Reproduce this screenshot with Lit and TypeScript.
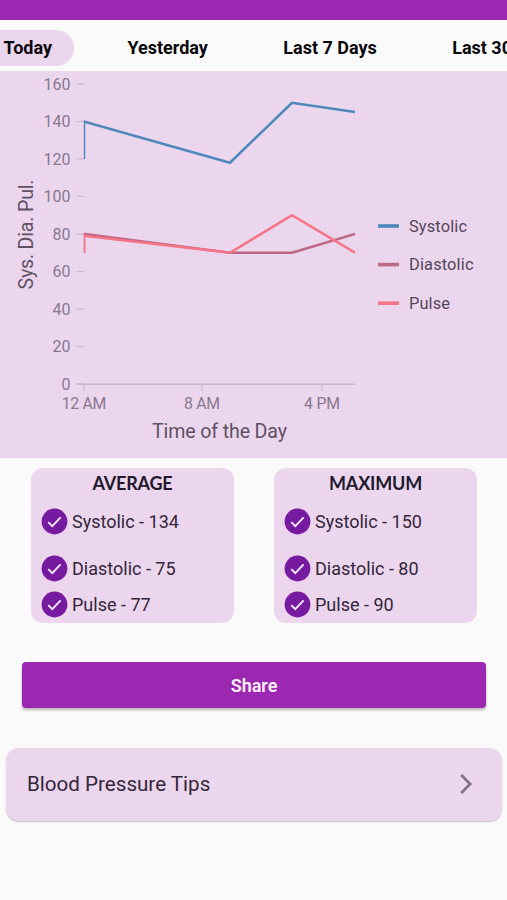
import { LitElement, html, css, svg } from "lit";
import { customElement, property } from "lit/decorators.js";

type Point = [number, number];

const BASE_Y = 313;
const UNIT = 1.875;
const TOP = 13;

@customElement("pressure-chart")
export class PressureChart extends LitElement {
  static styles = css`
    :host { display: block; height: 387px; background: #ebd6ee; }
    svg { display: block; width: 507px; height: 387px; font-family: Roboto, "Noto Sans", sans-serif; }
    .tick { fill: #87788d; font-size: 16px; }
    .hour { fill: #87788d; font-size: 15.8px; }
    .title { fill: #5f5164; font-size: 19.6px; }
    .legend { fill: #54465a; font-size: 16.4px; }
    .axis { stroke: #c9b5cf; stroke-width: 1.6; }
    .mark { stroke: #cdbad2; stroke-width: 1.4; }
    .line { fill: none; stroke-width: 2.5; stroke-linejoin: miter; }
  `;

  private series: { name: string; color: string; width: number; points: Point[] }[] = [
    { name: "Systolic", color: "#4e87b9", width: 58, points: [[84, 120], [84, 140], [230, 118], [292, 150], [355, 145]] },
    { name: "Diastolic", color: "#bd6985", width: 64.5, points: [[84, 70], [84, 80], [230, 70], [292, 70], [355, 80]] },
    { name: "Pulse", color: "#f57486", width: 41, points: [[84, 70], [84, 79], [230, 70], [292, 90], [355, 70]] },
  ];

  private path(points: Point[]) {
    return points.map(([x, v]) => `${x},${BASE_Y - v * UNIT}`).join(" ");
  }

  render() {
    const values = [0, 20, 40, 60, 80, 100, 120, 140, 160];
    const hours: [number, string, number][] = [[84, "12 AM", 44.5], [202, "8 AM", 36], [322, "4 PM", 36]];
    return html`<svg viewBox="0 0 507 387">
      <clipPath id="plot"><rect x="83.8" y=${TOP} width="271.2" height="300"></rect></clipPath>
      ${values.map((v) => {
        const y = BASE_Y - v * UNIT;
        return svg`<line class="mark" x1="77" x2="84" y1=${y} y2=${y}></line>
          <text class="tick" x="70.5" y=${y + 5.7} text-anchor="end">${v}</text>`;
      })}
      <line class="axis" x1="77" x2="355" y1="313.3" y2="313.3"></line>
      ${hours.map(([x, t, w]) => svg`<line class="mark" x1=${x} x2=${x} y1="313" y2="320"></line>
        <text class="hour" x=${x} y="338" text-anchor="middle" textLength=${w}>${t}</text>`)}
      <g clip-path="url(#plot)">
        ${this.series.map((s) => svg`<polyline class="line" stroke=${s.color} points=${this.path(s.points)}></polyline>`)}
      </g>
      <text class="title" x="219.5" y="366.5" text-anchor="middle" textLength="135">Time of the Day</text>
      <text class="title" transform="translate(32.5 163.5) rotate(-90)" text-anchor="middle" textLength="110">Sys. Dia. Pul.</text>
      ${this.series.map((s, i) => {
        const y = 155 + i * 38.6;
        return svg`<rect x="378" y=${y - 1.8} width="21" height="3.6" fill=${s.color}></rect>
          <text class="legend" x="409" y=${y + 5.7} textLength=${s.width}>${s.name}</text>`;
      })}
    </svg>`;
  }
}

@customElement("stat-card")
export class StatCard extends LitElement {
  static styles = css`
    :host { display: block; box-sizing: border-box; width: 203px; height: 155px; border-radius: 12px; background: #ebd6ee; }
    .heading { height: 30px; text-align: center; font: 700 18px/31px Lato, sans-serif; letter-spacing: -0.2px; color: #22182b; }
    .row { display: flex; align-items: center; gap: 4px; height: 26px; padding-left: 10px; font-size: 18px; color: #33263a; }
    .row + .row { margin-top: 21px; }
    .row + .row + .row { margin-top: 10px; }
    .first { margin-top: 10px; }
    svg { width: 27px; height: 27px; flex: none; }
  `;
  @property() heading = "";
  @property({ attribute: false }) items: [string, number][] = [];

  render() {
    return html`<div class="heading">${this.heading}</div>
      ${this.items.map(([name, value], i) => html`<div class="row ${i === 0 ? "first" : ""}">
        <svg viewBox="0 0 27 27">
          <circle cx="13.5" cy="13.5" r="12.9" fill="#761ba0"></circle>
          <path d="M7.3 14.1l4 4 8.3-8.7" fill="none" stroke="#f6e9f8" stroke-width="1.9"></path>
        </svg>
        <span>${name} - ${value}</span>
      </div>`)}`;
  }
}

@customElement("app-root")
export class AppRoot extends LitElement {
  static styles = css`
    :host { display: block; width: 507px; height: 900px; overflow: hidden; background: #fafafa; font-family: Roboto, "Noto Sans", sans-serif; }
    .status { height: 19.5px; background: #9c27b0; }
    .tabs { display: flex; align-items: center; height: 51.5px; overflow: hidden; box-sizing: border-box; padding-top: 5px; }
    .tab { flex: none; height: 36px; line-height: 36px; margin-right: 32.4px; padding: 0 21.5px; border-radius: 18px; font-size: 18px; font-weight: 700; color: #0b080d; white-space: nowrap; }
    .tab.active { margin-left: -18px; background: #ebd6ee; }
    .cards { display: flex; gap: 40px; padding: 10px 0 0 31px; }
    .share { display: flex; align-items: center; justify-content: center; height: 46px; margin: 39px 21px 0 22px; border-radius: 4px; background: #9c27b0; color: #fcf1fd; font-size: 18px; font-weight: 600; box-shadow: 0 2px 3px rgba(0, 0, 0, 0.28); }
    .tips { display: flex; align-items: center; justify-content: space-between; height: 73px; box-sizing: border-box; margin: 40px 5.5px 0 6px; padding: 0 29px 1px 21px; border-radius: 13px; background: #ebd6ee; color: #33263a; font-size: 20.6px; box-shadow: 0 1px 1.5px rgba(0, 0, 0, 0.24); }
    .tips svg { width: 14px; height: 22px; }
  `;

  render() {
    return html`<div class="status"></div>
      <div class="tabs">
        ${["Today", "Yesterday", "Last 7 Days", "Last 30 Days"].map((t, i) => html`<div class="tab ${i === 0 ? "active" : ""}">${t}</div>`)}
      </div>
      <pressure-chart></pressure-chart>
      <div class="cards">
        <stat-card heading="AVERAGE" .items=${[["Systolic", 134], ["Diastolic", 75], ["Pulse", 77]]}></stat-card>
        <stat-card heading="MAXIMUM" .items=${[["Systolic", 150], ["Diastolic", 80], ["Pulse", 90]]}></stat-card>
      </div>
      <div class="share">Share</div>
      <div class="tips">
        <span>Blood Pressure Tips</span>
        <svg viewBox="0 0 14 22"><path d="M2.2 2l9 9-9 9" fill="none" stroke="#806f86" stroke-width="2.6"></path></svg>
      </div>`;
  }
}
